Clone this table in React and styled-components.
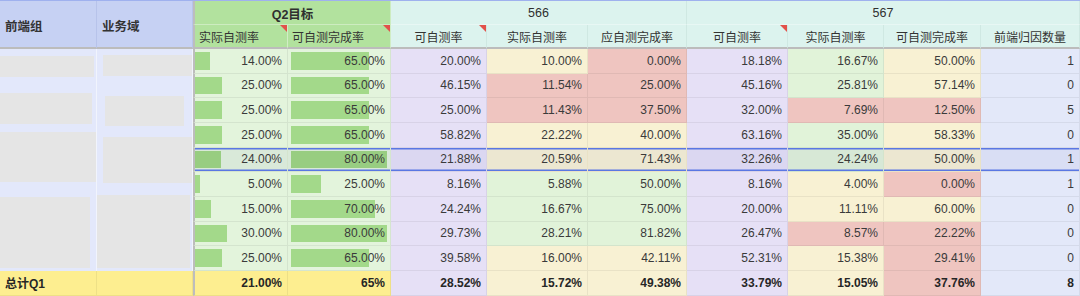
import React from "react";
import styled, { createGlobalStyle, css } from "styled-components";

const GlobalStyle = createGlobalStyle`
  html, body {
    margin: 0;
    padding: 0;
    background: #ffffff;
  }
  body {
    font-family: "Liberation Sans", "Noto Sans CJK SC", sans-serif;
  }
`;

const tones = {
  hdBlue: "#c6d1f3",
  hdGreen: "#b2e29e",
  hdMint: "#dcf3ee",
  frozen: "#e3e8fb",
  bar: "#e3f4dc",
  lav: "#e6e0f6",
  r: "#efc5c0",
  y: "#f8f1d3",
  g: "#e1f3d9",
  blue: "#e3e8f9",
  total: "#fdee90",
};

const Sheet = styled.div`
  display: grid;
  grid-template-columns: 97px 96px 95px 103px 96px 101px 99px 101px 96px 97px 99px;
  grid-template-rows: 24px 24px repeat(9, 24.67px) 25px;
  width: 1080px;
  height: 296px;
  box-sizing: border-box;
  border-top: 1px solid #9fb1ee;
  font-size: 12px;
  color: #3a3a3a;
  overflow: hidden;
`;

const Cell = styled.div`
  position: relative;
  box-sizing: border-box;
  display: flex;
  align-items: center;
  justify-content: ${({ $align }) =>
    $align === "left" ? "flex-start" : $align === "center" ? "center" : "flex-end"};
  padding: 0 5px;
  background: ${({ $tone }) => tones[$tone]};
  border-right: 1px solid rgba(0, 0, 0, 0.06);
  border-bottom: 1px solid rgba(0, 0, 0, 0.06);
  font-weight: ${({ $bold }) => ($bold ? 700 : 400)};
  color: ${({ $bold }) => ($bold ? "#262626" : "#3a3a3a")};
  white-space: nowrap;
  overflow: hidden;
  ${({ $edge }) =>
    $edge &&
    css`
      border-left: 2px solid #bdbdbd;
    `}
  ${({ $hl }) =>
    $hl &&
    css`
      box-shadow: inset 0 1.5px 0 #5a77e3, inset 0 -1.5px 0 #5a77e3,
        inset 0 0 0 200px rgba(90, 100, 190, 0.07);
    `}
`;

const FrozenHead = styled(Cell)`
  grid-row: span 2;
  align-items: center;
  padding-top: 3px;
  border-right: 1px solid #b7c3ea;
  border-bottom: 2px solid #bcbcbc;
  font-weight: 700;
  font-size: 12.5px;
  color: #333;
`;

const GroupHead = styled(Cell)`
  grid-column: span ${({ $span }) => $span};
  justify-content: center;
  padding-top: 1px;
  font-size: 12.5px;
  color: #2f2f2f;
  border-bottom: 1px solid rgba(255, 255, 255, 0.35);
  border-right: 1px solid ${({ $tone }) => ($tone === "hdGreen" ? "rgba(255,255,255,0.35)" : "#cfe8e2")};
`;

const SubHead = styled(Cell)`
  border-bottom: 2px solid #bcbcbc;
  border-right: 1px solid ${({ $tone }) => ($tone === "hdGreen" ? "rgba(255,255,255,0.4)" : "#cfe8e2")};
  color: #333;
  padding: 0 4px;
  ${({ $flag }) =>
    $flag &&
    css`
      &::after {
        content: "";
        position: absolute;
        top: 0;
        right: 0;
        width: 0;
        height: 0;
        border-top: 7px solid #e2514a;
        border-left: 7px solid transparent;
      }
    `}
`;

const FrozenBody = styled.div`
  grid-row: span 9;
  display: flex;
  flex-direction: column;
  background: ${tones.frozen};
  border-right: 1px solid rgba(255, 255, 255, 0.5);
  overflow: hidden;
`;

const Redacted = styled.div`
  flex: none;
  margin-top: ${({ $top }) => $top}px;
  margin-left: ${({ $left }) => $left || 0}px;
  width: ${({ $w }) => $w}px;
  height: ${({ $h }) => $h}px;
  background: #e5e5e5;
`;

const Bar = styled.div`
  position: absolute;
  top: 3px;
  bottom: 3px;
  left: ${({ $inset }) => $inset}px;
  background: ${({ $hl }) => ($hl ? "#98cd81" : "#a3d98a")};
`;

const Value = styled.span`
  position: relative;
`;

const rows = [
  [14, 65, "20.00%", ["10.00%", "y"], ["0.00%", "r"], "18.18%", ["16.67%", "g"], ["50.00%", "y"], 1],
  [25, 65, "46.15%", ["11.54%", "r"], ["25.00%", "r"], "45.16%", ["25.81%", "g"], ["57.14%", "y"], 0],
  [25, 65, "25.00%", ["11.43%", "r"], ["37.50%", "r"], "32.00%", ["7.69%", "r"], ["12.50%", "r"], 5],
  [25, 65, "58.82%", ["22.22%", "y"], ["40.00%", "y"], "63.16%", ["35.00%", "g"], ["58.33%", "y"], 0],
  [24, 80, "21.88%", ["20.59%", "y"], ["71.43%", "y"], "32.26%", ["24.24%", "g"], ["50.00%", "y"], 1],
  [5, 25, "8.16%", ["5.88%", "g"], ["50.00%", "g"], "8.16%", ["4.00%", "y"], ["0.00%", "r"], 1],
  [15, 70, "24.24%", ["16.67%", "g"], ["75.00%", "g"], "20.00%", ["11.11%", "y"], ["60.00%", "y"], 0],
  [30, 80, "29.73%", ["28.21%", "g"], ["81.82%", "g"], "26.47%", ["8.57%", "r"], ["22.22%", "r"], 0],
  [25, 65, "39.58%", ["16.00%", "y"], ["42.11%", "y"], "52.31%", ["15.38%", "y"], ["29.41%", "r"], 0],
];

const groupBlocks = [
  { top: 7, h: 21, w: 94 },
  { top: 16, h: 31, w: 92 },
  { top: 8, h: 50, w: 96 },
  { top: 15, h: 71, w: 90 },
];

const domainBlocks = [
  { top: 6, h: 21, w: 89, left: 6 },
  { top: 20, h: 30, w: 79, left: 8 },
  { top: 11, h: 46, w: 89, left: 6 },
  { top: 12, h: 73, w: 93, left: 0 },
];

const HIGHLIGHT = 4;

const pct = (n) => `${n.toFixed(2)}%`;

const DataRow = ({ row, hl }) => {
  const [act, done, a566, b566, c566, a567, b567, c567, count] = row;
  return (
    <>
      <Cell $tone="bar" $edge $hl={hl}>
        <Bar $inset={0} $hl={hl} style={{ width: act * 1.08 }} />
        <Value>{pct(act)}</Value>
      </Cell>
      <Cell $tone="bar" $hl={hl}>
        <Bar $inset={2.5} $hl={hl} style={{ width: done * 1.2 }} />
        <Value>{pct(done)}</Value>
      </Cell>
      <Cell $tone="lav" $hl={hl}>{a566}</Cell>
      <Cell $tone={b566[1]} $hl={hl}>{b566[0]}</Cell>
      <Cell $tone={c566[1]} $hl={hl}>{c566[0]}</Cell>
      <Cell $tone="lav" $hl={hl}>{a567}</Cell>
      <Cell $tone={b567[1]} $hl={hl}>{b567[0]}</Cell>
      <Cell $tone={c567[1]} $hl={hl}>{c567[0]}</Cell>
      <Cell $tone="blue" $hl={hl}>{count}</Cell>
    </>
  );
};

export default function App() {
  return (
    <>
      <GlobalStyle />
      <Sheet>
        <FrozenHead $tone="hdBlue" $align="left">前端组</FrozenHead>
        <FrozenHead $tone="hdBlue" $align="left">业务域</FrozenHead>
        <GroupHead $tone="hdGreen" $span={2} $bold $edge>Q2目标</GroupHead>
        <GroupHead $tone="hdMint" $span={3}>566</GroupHead>
        <GroupHead $tone="hdMint" $span={4}>567</GroupHead>

        <SubHead $tone="hdGreen" $align="left" $edge $flag>实际自测率</SubHead>
        <SubHead $tone="hdGreen" $align="left" $flag>可自测完成率</SubHead>
        <SubHead $tone="hdMint" $align="center" $flag>可自测率</SubHead>
        <SubHead $tone="hdMint" $align="center">实际自测率</SubHead>
        <SubHead $tone="hdMint" $align="center">应自测完成率</SubHead>
        <SubHead $tone="hdMint" $align="center" $flag>可自测率</SubHead>
        <SubHead $tone="hdMint" $align="center">实际自测率</SubHead>
        <SubHead $tone="hdMint" $align="center">可自测完成率</SubHead>
        <SubHead $tone="hdMint" $align="center">前端归因数量</SubHead>

        <FrozenBody>
          {groupBlocks.map((b, i) => (
            <Redacted key={i} $top={b.top} $h={b.h} $w={b.w} />
          ))}
        </FrozenBody>
        <FrozenBody>
          {domainBlocks.map((b, i) => (
            <Redacted key={i} $top={b.top} $h={b.h} $w={b.w} $left={b.left} />
          ))}
        </FrozenBody>

        {rows.map((row, i) => (
          <DataRow key={i} row={row} hl={i === HIGHLIGHT} />
        ))}

        <Cell $tone="total" $align="left" $bold>总计Q1</Cell>
        <Cell $tone="total" />
        <Cell $tone="total" $edge $bold>21.00%</Cell>
        <Cell $tone="total" $bold>65%</Cell>
        <Cell $tone="lav" $bold>28.52%</Cell>
        <Cell $tone="y" $bold>15.72%</Cell>
        <Cell $tone="y" $bold>49.38%</Cell>
        <Cell $tone="lav" $bold>33.79%</Cell>
        <Cell $tone="y" $bold>15.05%</Cell>
        <Cell $tone="r" $bold>37.76%</Cell>
        <Cell $tone="blue" $bold>8</Cell>
      </Sheet>
    </>
  );
}
